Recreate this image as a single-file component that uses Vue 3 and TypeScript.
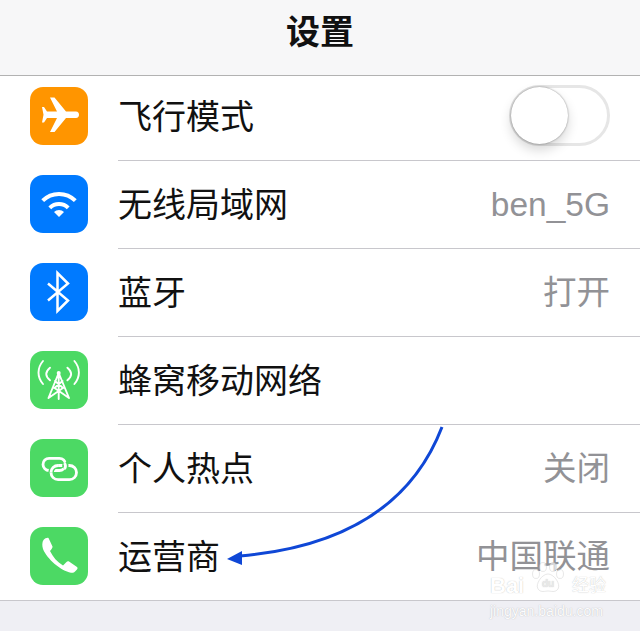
<script setup lang="ts">
interface Row {
  key: string
  label: string
  value?: string
  color: string
}

const rows: Row[] = [
  { key: 'plane', label: '飞行模式', color: '#ff9500' },
  { key: 'wifi', label: '无线局域网', value: 'ben_5G', color: '#007aff' },
  { key: 'bt', label: '蓝牙', value: '打开', color: '#007aff' },
  { key: 'cell', label: '蜂窝移动网络', color: '#4cd964' },
  { key: 'hotspot', label: '个人热点', value: '关闭', color: '#4cd964' },
  { key: 'phone', label: '运营商', value: '中国联通', color: '#4cd964' }
]
</script>

<template>
  <div class="page">
    <header class="nav">设置</header>
    <ul class="list">
      <li v-for="row in rows" :key="row.key" class="row">
        <span class="icon" :style="{ background: row.color }">
          <svg viewBox="0 0 58 58" width="58" height="58">
            <path v-if="row.key === 'plane'" fill="#fff" d="M46 24.6c2 0 3 1.600 3 3.200s-1 3.200-3 3.200H36L24.500 45H20l7-14H17l-3 4.500h-2l1.500-7.700L12 20h2l3 4.600h10l-7-14h4.500L36 24.600z" />
            <g v-else-if="row.key === 'wifi'" fill="none" stroke="#fff" stroke-width="4">
              <path d="M12.700 25.700A23 23 0 0 1 45.300 25.700" />
              <path d="M19.800 32.800A13 13 0 0 1 38.200 32.800" />
              <path fill="#fff" stroke="none" d="M29 42L24 37A7 7 0 0 1 34 37Z" />
            </g>
            <path v-else-if="row.key === 'bt'" fill="none" stroke="#fff" stroke-width="2.500" d="M18 20.500L38 37.500L27.500 48V10L38 20.500L18 37.500" />
            <g v-else-if="row.key === 'cell'" fill="none" stroke="#fff" stroke-width="1.900" stroke-linecap="round">
              <path d="M13 10C7 17 7 26 13 33M44.400 10C50.400 17 50.400 26 44.400 33M20 16.700C15 21 15 25 20 29.300M37.400 16.700C42.400 21 42.400 25 37.400 29.300" />
              <path d="M28.700 22V48M28.700 22L18.500 47M28.700 22L39 47M18.500 47L33 37L25 30M39 47L24.500 37L32.500 30" />
              <circle cx="28.700" cy="22" r="2" fill="#fff" stroke="none" />
            </g>
            <g v-else-if="row.key === 'hotspot'" fill="none" stroke-width="2.800">
              <rect x="21" y="26.500" width="25.500" height="14.200" rx="7.100" stroke="#fff" />
              <rect x="13" y="19.300" width="22.500" height="12.200" rx="6.100" stroke="#fff" />
              <path d="M34.500 24C35.800 26 35.800 28 34.500 30" stroke="#4cd964" stroke-width="6" />
              <path d="M34.500 24C35.800 26 35.800 28 34.500 30" stroke="#fff" />
              <path d="M21 33.600A7.100 7.100 0 0 1 28.100 26.500" stroke="#4cd964" stroke-width="5.500" />
              <path d="M21 33.600A7.100 7.100 0 0 1 28.100 26.500" stroke="#fff" />
            </g>
            <path v-else fill="#fff" d="M13.500 13C15 11.500 17 10.500 18.500 11L22.500 19.500C22.700 20.500 22 21.500 20 24C23 30 27 35 33 38.500L36 35.500C37 34.500 38 34 39 34.500L47 40C48 41 47.500 42 46.500 43C44.500 45.500 43 46 41 45.700C31 44 17 32 13 22C12 19 12 15 13.500 13Z" />
          </svg>
        </span>
        <div class="body">
          <span class="label">{{ row.label }}</span>
          <span v-if="row.value" class="value">{{ row.value }}</span>
          <span v-if="row.key === 'plane'" class="switch"><i class="knob"></i></span>
        </div>
      </li>
    </ul>

    <svg class="arrow" width="640" height="631" viewBox="0 0 640 631">
      <path d="M442 427C412 505 345 547 240 556" fill="none" stroke="#0f47d6" stroke-width="3" />
      <path d="M227 559L242 551L242 565Z" fill="#0f47d6" />
    </svg>
    <div class="mark">
      <div class="mark-top">
        <span>Bai</span>
        <svg class="paw" width="34" height="32" viewBox="0 0 34 32">
          <g fill="#fff" stroke="#bbb" stroke-opacity="0.5">
            <ellipse cx="5" cy="12" rx="3.500" ry="4.500" />
            <ellipse cx="12" cy="5" rx="3.500" ry="4.500" />
            <ellipse cx="22" cy="5" rx="3.500" ry="4.500" />
            <ellipse cx="29" cy="12" rx="3.500" ry="4.500" />
            <path d="M17 12C23 12 30 22 27 27C24 31 20 29 17 29C14 29 10 31 7 27C4 22 11 12 17 12Z" />
          </g>
          <text x="17" y="25" text-anchor="middle" font-size="10" font-weight="700" fill="#ddd">du</text>
        </svg>
        <span class="mark-cn">经验</span>
      </div>
      <div class="mark-url">jingyan.baidu.com</div>
    </div>
  </div>
</template>

<style scoped>
.page {
  position: relative;
  width: 640px;
  height: 631px;
  overflow: hidden;
  background: #efeff4;
  font-family: "Liberation Sans", "Noto Sans CJK SC", sans-serif;
}

.nav {
  height: 65px;
  padding-top: 10px;
  background: #f7f7f8;
  border-bottom: 1px solid #b2b2b2;
  text-align: center;
  font-size: 34px;
  line-height: 44px;
  font-weight: 700;
  color: #111;
}

.list {
  margin: 0;
  padding: 0;
  list-style: none;
  background: #fff;
  border-bottom: 1px solid #c8c7cc;
}

.row {
  display: flex;
  align-items: flex-start;
  height: 88px;
  padding-left: 30px;
}

.row:first-child {
  height: 85px;
}

.row:last-child {
  height: 87px;
}

.icon {
  flex: none;
  width: 58px;
  height: 58px;
  margin-top: 14px;
  border-radius: 13px;
  display: block;
}

.row:first-child .icon {
  margin-top: 11px;
}

.icon svg {
  display: block;
}

.body {
  flex: 1;
  height: 100%;
  box-sizing: border-box;
  margin-left: 30px;
  padding-right: 30px;
  display: flex;
  align-items: center;
  justify-content: space-between;
  border-bottom: 1px solid #c8c7cc;
}

.row:first-child .body {
  padding-bottom: 2px;
}

.row:last-child .body {
  border-bottom: none;
}

.label {
  font-size: 34px;
  line-height: 40px;
  color: #111;
}

.value {
  font-size: 33.5px;
  line-height: 34px;
  color: #929296;
}

.switch {
  position: relative;
  display: block;
  width: 101px;
  height: 61px;
  margin-bottom: 4px;
  box-sizing: border-box;
  border: 3px solid #e6e6e6;
  border-radius: 31px;
}

.knob {
  position: absolute;
  left: -1px;
  top: -1px;
  width: 57px;
  height: 57px;
  border-radius: 50%;
  background: #fff;
  box-shadow: 0 6px 12px rgba(0, 0, 0, 0.16), 0 0 2px rgba(0, 0, 0, 0.45);
}

.arrow {
  position: absolute;
  left: 0;
  top: 0;
}

.mark {
  position: absolute;
  left: 490px;
  top: 562px;
  width: 116px;
  color: #fff;
  text-shadow: 0 0 1px rgba(110, 110, 110, 0.55);
}

.mark-top {
  display: flex;
  align-items: flex-end;
  justify-content: space-between;
  font-size: 22px;
  line-height: 16px;
  font-weight: 700;
  opacity: 0.85;
}

.mark-cn {
  font-size: 17px;
  font-weight: 400;
}

.paw {
  display: block;
  opacity: 0.75;
}

.mark-url {
  font-size: 14px;
  line-height: 16px;
  margin-top: 9px;
  white-space: nowrap;
  opacity: 0.85;
}
</style>
